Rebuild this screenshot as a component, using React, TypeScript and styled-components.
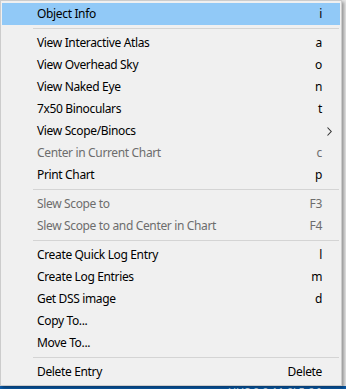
import styled, { createGlobalStyle } from 'styled-components';

type Entry =
  | { kind: 'item'; label: string; shortcut?: string; disabled?: boolean; active?: boolean; submenu?: boolean }
  | { kind: 'separator' };

const entries: Entry[] = [
  { kind: 'item', label: 'Object Info', shortcut: 'i', active: true },
  { kind: 'separator' },
  { kind: 'item', label: 'View Interactive Atlas', shortcut: 'a' },
  { kind: 'item', label: 'View Overhead Sky', shortcut: 'o' },
  { kind: 'item', label: 'View Naked Eye', shortcut: 'n' },
  { kind: 'item', label: '7x50 Binoculars', shortcut: 't' },
  { kind: 'item', label: 'View Scope/Binocs', submenu: true },
  { kind: 'item', label: 'Center in Current Chart', shortcut: 'c', disabled: true },
  { kind: 'item', label: 'Print Chart', shortcut: 'p' },
  { kind: 'separator' },
  { kind: 'item', label: 'Slew Scope to', shortcut: 'F3', disabled: true },
  { kind: 'item', label: 'Slew Scope to and Center in Chart', shortcut: 'F4', disabled: true },
  { kind: 'separator' },
  { kind: 'item', label: 'Create Quick Log Entry', shortcut: 'l' },
  { kind: 'item', label: 'Create Log Entries', shortcut: 'm' },
  { kind: 'item', label: 'Get DSS image', shortcut: 'd' },
  { kind: 'item', label: 'Copy To...' },
  { kind: 'item', label: 'Move To...' },
  { kind: 'separator' },
  { kind: 'item', label: 'Delete Entry', shortcut: 'Delete' },
];

const GlobalStyle = createGlobalStyle`
  html, body {
    margin: 0;
    padding: 0;
    background: #e6e6e6;
  }
  body {
    font-family: "Noto Sans", "Open Sans", sans-serif;
    font-size: 12px;
  }
`;

const Page = styled.div`
  width: 346px;
  height: 389px;
  display: flex;
  flex-direction: column;
  overflow: hidden;
`;

const Menu = styled.ul`
  position: relative;
  z-index: 1;
  width: 338px;
  margin: 0;
  padding: 2px 1px;
  list-style: none;
  background: #f0f0f0;
  border: 1px solid #cccccc;
  box-shadow: 2px 2px 3px rgba(0, 0, 0, 0.35);
`;

const Item = styled.li<{ $active?: boolean; $disabled?: boolean }>`
  display: grid;
  grid-template-columns: 1fr auto 18px;
  align-items: center;
  height: 22px;
  padding-left: 35px;
  background: ${(p) => (p.$active ? '#91c9f7' : 'transparent')};
  color: ${(p) => (p.$disabled ? '#6d6d6d' : '#000000')};
  white-space: nowrap;
  line-height: 22px;
  letter-spacing: -0.35px;
`;

const Label = styled.span``;

const Shortcut = styled.span`
  text-align: right;
`;

const Arrow = styled.svg`
  justify-self: end;
  margin-right: 8px;
`;

const Separator = styled.li`
  height: 7px;
  display: flex;
  align-items: center;
  padding-left: 31px;
  padding-right: 1px;

  &::after {
    content: '';
    flex: 1;
    height: 1px;
    background: #d4d4d4;
  }
`;

const Taskbar = styled.div`
  flex: 1;
  background: #0a5aa8;
  color: #cfe0f2;
  font-size: 11px;
  line-height: 11px;
  padding-left: 228px;
  white-space: nowrap;
  overflow: hidden;
`;

export default function App() {
  return (
    <Page>
      <GlobalStyle />
      <Menu>
        {entries.map((e, i) =>
          e.kind === 'separator' ? (
            <Separator key={i} />
          ) : (
            <Item key={i} $active={e.active} $disabled={e.disabled}>
              <Label>{e.label}</Label>
              <Shortcut>{e.shortcut}</Shortcut>
              {e.submenu ? (
                <Arrow width='5' height='9' viewBox='0 0 5 9'>
                  <path d='M0.5 0.5 L4.2 4.5 L0.5 8.5' fill='none' stroke='#333' strokeWidth='1.1' />
                </Arrow>
              ) : (
                <span />
              )}
            </Item>
          )
        )}
      </Menu>
      <Taskbar>UHS 0.0 11 0' 5.6 Irregular</Taskbar>
    </Page>
  );
}
